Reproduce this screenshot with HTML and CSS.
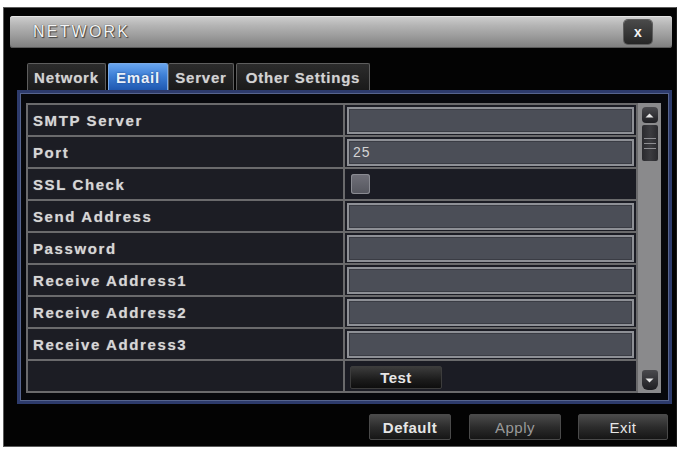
FILE: index.html
```html
<!DOCTYPE html>
<html lang="en">
<head>
<meta charset="utf-8">
<title>Network - Email</title>
<link rel="stylesheet" href="styles.css">
</head>
<body>
<div class="window">
  <div class="titlebar">
    <span class="title">NETWORK</span>
    <button class="close" type="button">x</button>
  </div>

  <div class="tabs">
    <div class="tab tab-network">Network</div>
    <div class="tab tab-email active">Email</div>
    <div class="tab tab-server">Server</div>
    <div class="tab tab-other">Other Settings</div>
  </div>

  <div class="panel">
    <div class="grid">
      <div class="label">SMTP Server</div>
      <div class="value"><div class="field"></div></div>

      <div class="label">Port</div>
      <div class="value"><div class="field">25</div></div>

      <div class="label">SSL Check</div>
      <div class="value plain"><span class="check"></span></div>

      <div class="label">Send Address</div>
      <div class="value"><div class="field"></div></div>

      <div class="label">Password</div>
      <div class="value"><div class="field"></div></div>

      <div class="label">Receive Address1</div>
      <div class="value"><div class="field"></div></div>

      <div class="label">Receive Address2</div>
      <div class="value"><div class="field"></div></div>

      <div class="label">Receive Address3</div>
      <div class="value"><div class="field"></div></div>

      <div class="label"></div>
      <div class="value plain"><button class="btn test" type="button">Test</button></div>
    </div>

    <div class="scrollbar">
      <div class="sb-btn sb-up">
        <svg width="9" height="5" viewBox="0 0 9 5"><path d="M0.5 4.5 L4.5 0.5 L8.5 4.5 Z" fill="#e6e6e6"/></svg>
      </div>
      <div class="sb-thumb">
        <span></span><span></span><span></span>
      </div>
      <div class="sb-space"></div>
      <div class="sb-btn sb-down">
        <svg width="9" height="5" viewBox="0 0 9 5"><path d="M0.5 0.5 L4.5 4.5 L8.5 0.5 Z" fill="#e6e6e6"/></svg>
      </div>
    </div>
  </div>

  <div class="actions">
    <button class="btn act-default" type="button">Default</button>
    <button class="btn act-apply" type="button">Apply</button>
    <button class="btn act-exit" type="button">Exit</button>
  </div>
</div>
</body>
</html>
```

FILE: styles.css
```css
html, body {
  margin: 0;
  padding: 0;
  background: #ffffff;
}

body {
  padding: 7px 0 0 3px;
  font-family: "Liberation Sans", Arial, sans-serif;
}

/* outer dialog frame */
.window {
  box-sizing: border-box;
  width: 674px;
  height: 440px;
  background: #030303;
  border: 1px solid #5c5c5c;
  border-right-color: #1a1a1a;
  padding: 8px 4px 0 6px;
  display: flex;
  flex-direction: column;
}

/* metallic title bar */
.titlebar {
  height: 32px;
  display: flex;
  align-items: center;
  justify-content: space-between;
  border-radius: 3px;
  background: linear-gradient(to bottom, #cfcfcf 0%, #b4b4b4 30%, #9a9a9a 65%, #7e7e7e 100%);
  box-shadow: inset 0 1px 0 #e4e4e4, inset 0 -1px 0 #5a5a5a;
  padding: 0 20px 0 23px;
}

.title {
  font-size: 16px;
  letter-spacing: 2.2px;
  color: #f4f4f4;
  text-shadow: 0 0 1px #2a2a2a, 1px 1px 1px #444;
}

.close {
  width: 28px;
  height: 24px;
  padding: 0;
  border: 0;
  border-radius: 4px;
  background: linear-gradient(to bottom, #4a4a4a, #262626);
  box-shadow: 0 0 0 1px #5c5c5c;
  color: #f4f4f4;
  font-family: "Liberation Sans", Arial, sans-serif;
  font-weight: bold;
  font-size: 14px;
  line-height: 22px;
}

/* tab strip */
.tabs {
  margin-top: 15px;
  padding-left: 17px;
  height: 27px;
  display: flex;
  align-items: flex-end;
  gap: 2px;
}

.tab {
  box-sizing: border-box;
  height: 27px;
  display: flex;
  align-items: center;
  justify-content: center;
  background: linear-gradient(to bottom, #2c2c2c, #1a1a1a);
  border: 1px solid #5e5e5e;
  border-bottom: 0;
  border-radius: 2px 2px 0 0;
  color: #d2d2d2;
  font-size: 15px;
  font-weight: bold;
  letter-spacing: 0.8px;
  text-shadow: 0 0 1px #777;
}

.tab-network { width: 79px; }
.tab-email { width: 60px; }
.tab-server { width: 66px; margin-left: -2px; }
.tab-other { width: 134px; }

.tab.active {
  background: linear-gradient(to bottom, #69a5ee 0%, #3d7fd6 45%, #1f58b0 100%);
  border-color: #7aaae6;
  color: #e9f1fb;
  text-shadow: 0 0 2px #1b3f7a;
}

/* blue framed content area */
.panel {
  box-sizing: border-box;
  margin-left: 7px;
  height: 314px;
  border: 3px solid #2d3b6c;
  box-shadow: inset 0 0 0 1px #56648f;
  background: #07080c;
  padding: 10px 8px 8px 6px;
  display: flex;
}

.grid {
  width: 612px;
  height: 290px;
  box-sizing: border-box;
  display: grid;
  grid-template-columns: 315px 291px;
  grid-auto-rows: 30px;
  gap: 2px;
  padding: 2px 2px;
  background: #6a6a6c;
}

.label {
  background: #1c1d24;
  color: #d6d6d6;
  font-size: 15px;
  font-weight: bold;
  letter-spacing: 1.6px;
  display: flex;
  align-items: center;
  padding-left: 5px;
  text-shadow: 0 0 1px #888;
}

.value {
  background: #1b1c24;
  display: flex;
  align-items: center;
  padding: 0 2px;
}

.field {
  box-sizing: border-box;
  width: 100%;
  height: 27px;
  background: #4b4e57;
  border: 2px solid #8e9096;
  box-shadow: inset 0 0 0 1px #3a3c44;
  color: #d4d4d4;
  font-size: 14px;
  letter-spacing: 1px;
  padding-left: 4px;
  display: flex;
  align-items: center;
}

.check {
  width: 19px;
  height: 20px;
  margin-left: 4px;
  border-radius: 3px;
  background: linear-gradient(to bottom, #707079, #55565e);
  box-shadow: inset 0 0 0 1px #8a8b92;
}

/* vertical scroller */
.scrollbar {
  width: 23px;
  height: 290px;
  background: #8a8a8c;
  display: flex;
  flex-direction: column;
  align-items: center;
  padding: 4px 0 3px;
  box-sizing: border-box;
}

.sb-btn {
  width: 16px;
  height: 16px;
  border-radius: 4px;
  background: linear-gradient(to bottom, #4a4a4e, #1e1e22);
  display: flex;
  align-items: center;
  justify-content: center;
}

.sb-down {
  height: 20px;
  border-radius: 3px 3px 6px 6px;
}

.sb-thumb {
  margin-top: 2px;
  width: 16px;
  height: 36px;
  background: linear-gradient(to right, #2a2a2e, #3c3c40, #2a2a2e);
  border-radius: 2px;
  display: flex;
  flex-direction: column;
  align-items: center;
  justify-content: center;
  gap: 4px;
}

.sb-thumb span {
  width: 12px;
  height: 1px;
  background: #8e8e92;
}

.sb-space {
  flex: 1;
}

/* dark push buttons */
.btn {
  box-sizing: border-box;
  height: 26px;
  padding: 0;
  border: 1px solid #4a4a4a;
  border-radius: 2px;
  background: linear-gradient(to bottom, #4a4a4a 0%, #2c2c2c 50%, #161616 100%);
  color: #e6e6e6;
  font-family: "Liberation Sans Narrow", "Liberation Sans", Arial, sans-serif;
  font-size: 15px;
  font-weight: bold;
  letter-spacing: 0.5px;
}

.test {
  width: 92px;
  height: 23px;
  margin-left: 3px;
  margin-top: 2px;
  border-color: #3c3c3c;
  background: linear-gradient(to bottom, #3c3c3c 0%, #1c1c1c 60%, #0e0e0e 100%);
}

.actions {
  margin-top: 10px;
  padding-right: 4px;
  display: flex;
  justify-content: flex-end;
  gap: 17px;
}

.act-default { width: 82px; margin-right: 1px; }
.act-apply { width: 92px; color: #9a9a9a; font-weight: normal; }
.act-exit { width: 90px; font-weight: normal; }
```
